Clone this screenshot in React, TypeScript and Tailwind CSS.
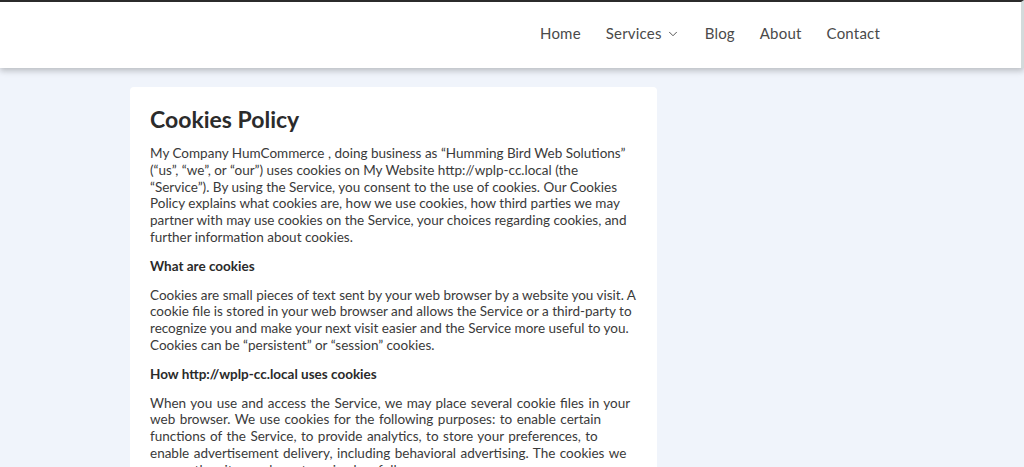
import { ChevronDown } from "lucide-react";

const navItems = ["Home", "Services", "Blog", "About", "Contact"];

function Header() {
  return (
    <header className="relative z-10 h-[68px] w-full border-t-2 border-r-[3px] border-t-[#2b2b2b] border-r-[#d3dadb] bg-white shadow-[0_3px_6px_rgba(0,0,0,0.22)]">
      <nav className="flex h-full items-center justify-end gap-[25px] pr-[141px] pb-[4px]">
        {navItems.map((item) => (
          <a
            key={item}
            href="#"
            className="flex items-center gap-[4px] text-[15px] tracking-[0.2px] text-[#4a4a4a]"
          >
            {item}
            {item === "Services" && (
              <ChevronDown size={14} strokeWidth={1.6} className="mt-[2px]" />
            )}
          </a>
        ))}
      </nav>
    </header>
  );
}

function Paragraph({ children, className = "" }: { children: React.ReactNode; className?: string }) {
  return (
    <p className={`mb-[12px] text-[13.5px] leading-[16.8px] text-[#3a3a3a] ${className}`}>{children}</p>
  );
}

function Subheading({ children }: { children: React.ReactNode }) {
  return <h3 className="mb-[12px] text-[13.5px] font-bold leading-[16.8px] text-[#2a2a2a]">{children}</h3>;
}

export default function App() {
  return (
    <div
      className="h-[467px] overflow-hidden bg-[#f0f4fb]"
      style={{ fontFamily: "Lato, 'Open Sans', sans-serif" }}
    >
      <Header />
      <main className="pl-[130px] pt-[19px]">
        <article className="w-[527px] rounded-[4px] bg-white px-[20px] pt-[18px] pb-6">
          <h1 className="mb-[12px] text-[23px] font-bold leading-[28px] text-[#2b2b2b]">
            Cookies Policy
          </h1>
          <Paragraph>
            My Company HumCommerce , doing business as “Humming Bird Web Solutions” (“us”, “we”, or
            “our”) uses cookies on My Website http://wplp-cc.local (the “Service”). By using the
            Service, you consent to the use of cookies. Our Cookies Policy explains what cookies
            are, how we use cookies, how third parties we may partner with may use cookies on the
            Service, your choices regarding cookies, and further information about cookies.
          </Paragraph>
          <Subheading>What are cookies</Subheading>
          <Paragraph>
            Cookies are small pieces of text sent by your web browser by a website you visit. A
            cookie file is stored in your web browser and allows the Service or a third-party to
            recognize you and make your next visit easier and the Service more useful to you.
            Cookies can be “persistent” or “session” cookies.
          </Paragraph>
          <Subheading>How http://wplp-cc.local uses cookies</Subheading>
          <Paragraph className="[word-spacing:1px]">
            When you use and access the Service, we may place several cookie files in your web
            browser. We use cookies for the following purposes: to enable certain functions of the
            Service, to provide analytics, to store your preferences, to enable advertisement
            delivery, including behavioral advertising. The cookies we use on the site can be
            categorised as follows:
          </Paragraph>
        </article>
      </main>
    </div>
  );
}
